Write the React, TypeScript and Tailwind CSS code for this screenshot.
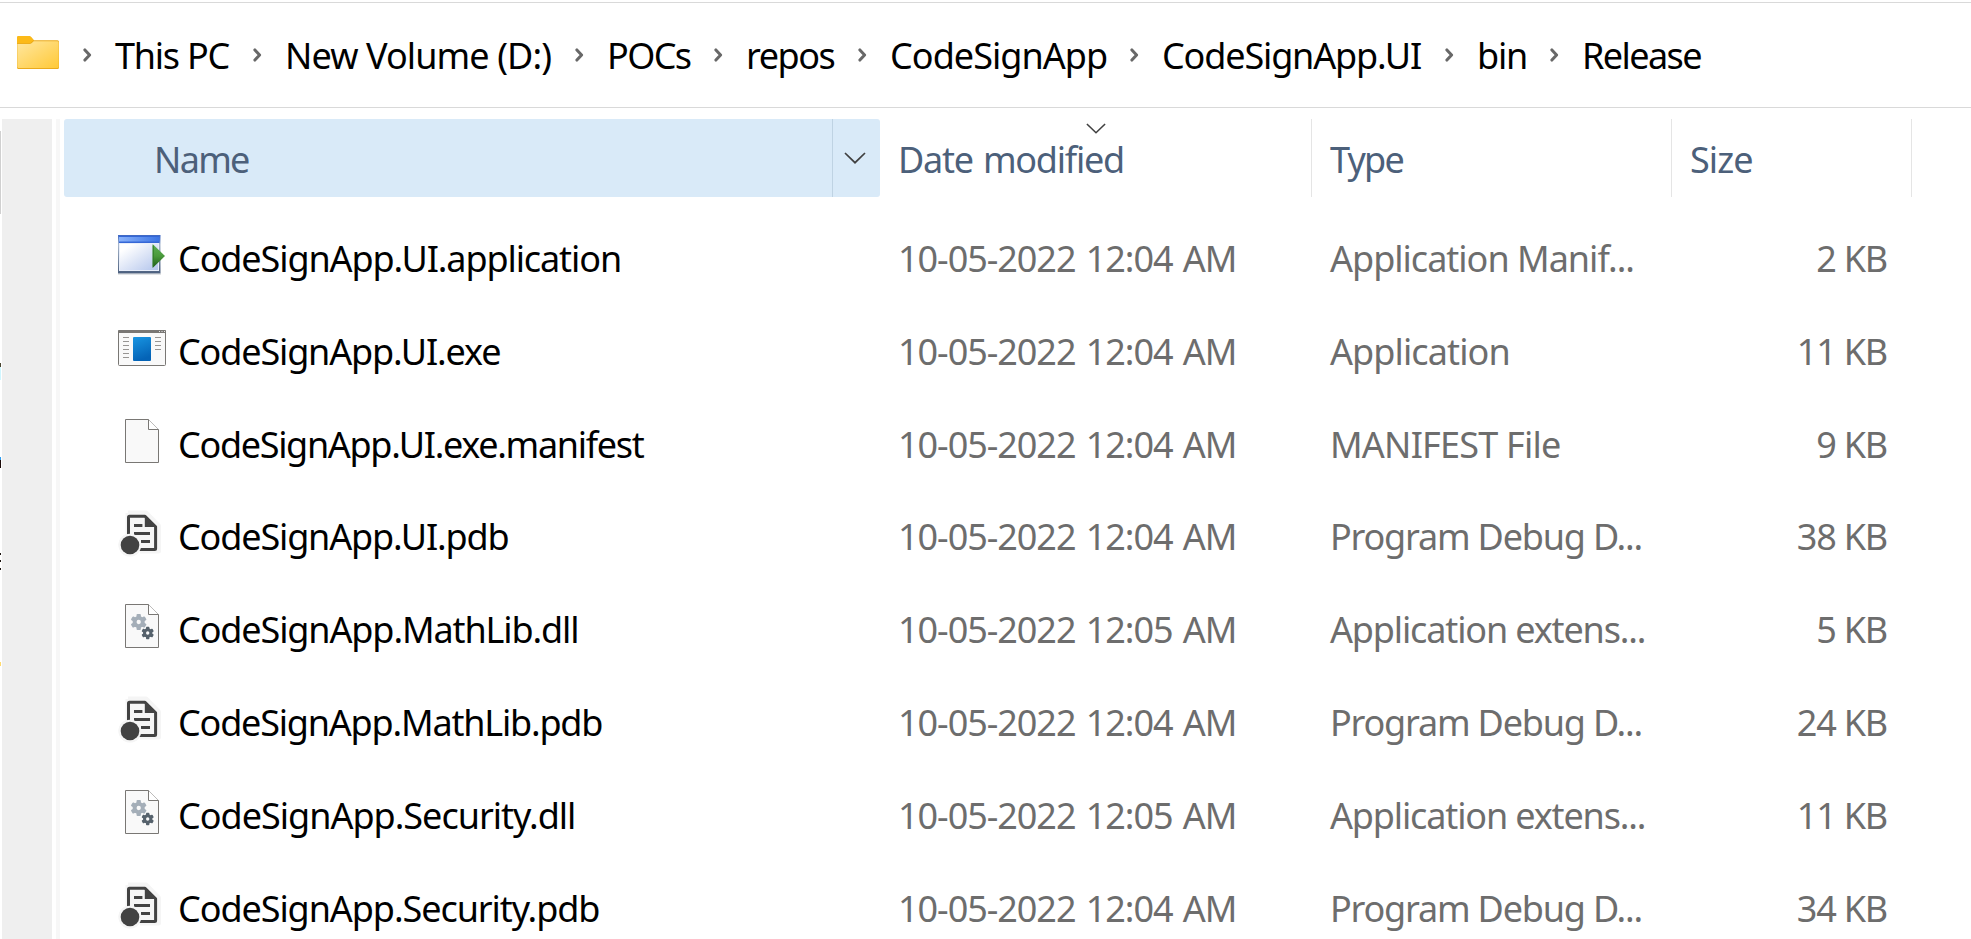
type IconKind = "application" | "exe" | "file" | "pdb" | "dll";

const crumbs = [
  { label: "This PC", cls: "w-[170px] tracking-[-1.25px]" },
  { label: "New Volume (D:)", cls: "w-[322px] tracking-[-0.9px]" },
  { label: "POCs", cls: "w-[139px] tracking-[-1.6px]" },
  { label: "repos", cls: "w-[144px] tracking-[-1.45px]" },
  { label: "CodeSignApp", cls: "w-[272px] tracking-[-0.95px]" },
  { label: "CodeSignApp.UI", cls: "w-[315px] tracking-[-1.15px]" },
  { label: "bin", cls: "w-[105px] tracking-[-1.2px]" },
  { label: "Release", cls: "w-[180px] tracking-[-1.6px]" },
];

const APP_MANIFEST = { type: "Application Manif...", typeCls: "tracking-[-1px]" };
const APPLICATION = { type: "Application", typeCls: "tracking-[-0.9px]" };
const MANIFEST = { type: "MANIFEST File", typeCls: "tracking-[-0.78px]" };
const DEBUG = { type: "Program Debug D...", typeCls: "tracking-[-1.2px]" };
const EXTENSION = { type: "Application extens...", typeCls: "tracking-[-1.15px]" };

const files: {
  icon: IconKind;
  name: string;
  nameCls: string;
  date: string;
  type: string;
  typeCls: string;
  size: string;
}[] = [
  { icon: "application", name: "CodeSignApp.UI.application", nameCls: "tracking-[-1.1px]", date: "10-05-2022 12:04 AM", ...APP_MANIFEST, size: "2 KB" },
  { icon: "exe", name: "CodeSignApp.UI.exe", nameCls: "tracking-[-1.15px]", date: "10-05-2022 12:04 AM", ...APPLICATION, size: "11 KB" },
  { icon: "file", name: "CodeSignApp.UI.exe.manifest", nameCls: "tracking-[-1.32px]", date: "10-05-2022 12:04 AM", ...MANIFEST, size: "9 KB" },
  { icon: "pdb", name: "CodeSignApp.UI.pdb", nameCls: "tracking-[-1.15px]", date: "10-05-2022 12:04 AM", ...DEBUG, size: "38 KB" },
  { icon: "dll", name: "CodeSignApp.MathLib.dll", nameCls: "tracking-[-1.12px]", date: "10-05-2022 12:05 AM", ...EXTENSION, size: "5 KB" },
  { icon: "pdb", name: "CodeSignApp.MathLib.pdb", nameCls: "tracking-[-1.2px]", date: "10-05-2022 12:04 AM", ...DEBUG, size: "24 KB" },
  { icon: "dll", name: "CodeSignApp.Security.dll", nameCls: "tracking-[-1px]", date: "10-05-2022 12:05 AM", ...EXTENSION, size: "11 KB" },
  { icon: "pdb", name: "CodeSignApp.Security.pdb", nameCls: "tracking-[-1.07px]", date: "10-05-2022 12:04 AM", ...DEBUG, size: "34 KB" },
];

function Folder() {
  return (
    <svg width="42" height="35" viewBox="0 0 42 35" className="block shrink-0">
      <defs>
        <linearGradient id="folder" x1="0" y1="0" x2="1" y2="1">
          <stop offset="0" stopColor="#ffe7a0" />
          <stop offset="1" stopColor="#ffc937" />
        </linearGradient>
      </defs>
      <path d="M0 1.5Q0 0 1.5 0H12Q13.5 0 14.5 1.5L17 4.2H40.5Q42 4.2 42 5.7V31.5Q42 33 40.5 33H1.5Q0 33 0 31.5Z" fill="#eaaa1c" />
      <path d="M0 1.5Q0 0 1.5 0H12Q13.5 0 14.5 1.5L16.6 4.2L13 7.2H0Z" fill="#fcba18" />
      <path d="M0.3 8H12.5Q13.8 8 14.8 7L16.7 5.2H40.2Q41.7 5.2 41.7 6.5V30.8Q41.7 32 40.4 32H1.6Q0.3 32 0.3 30.8Z" fill="url(#folder)" />
    </svg>
  );
}

function CrumbChevron() {
  return (
    <svg width="9" height="14" viewBox="0 0 9 14" className="mr-[23px] block shrink-0">
      <path d="M1.9 1.9L6.6 7L1.9 12.1" fill="none" stroke="#686868" strokeWidth="3" strokeLinecap="round" strokeLinejoin="round" />
    </svg>
  );
}

function Gear({ cx, cy, r, fill }: { cx: number; cy: number; r: number; fill: string }) {
  return (
    <g transform={`translate(${cx} ${cy})`}>
      {[0, 60, 120].map((a) => (
        <rect key={a} x={-r * 0.27} y={-r} width={r * 0.54} height={r * 2} rx={r * 0.12} transform={`rotate(${a})`} fill={fill} />
      ))}
      <circle r={r * 0.76} fill={fill} />
      <circle r={r * 0.27} fill="#f9f9f9" />
    </g>
  );
}

function Page() {
  return (
    <>
      <path d="M7.5 2.5H30.5L40.5 12.5V45.5H7.5Z" fill="#f9f9f9" stroke="#797774" strokeWidth="1" />
      <path d="M30.5 2.5V12.5H40.5" fill="#fff" stroke="#797774" strokeWidth="1" />
    </>
  );
}

function FileIcon({ kind }: { kind: IconKind }) {
  return (
    <svg width="48" height="48" viewBox="0 0 48 48" className="-mt-[6px] block shrink-0">
      {kind === "application" && (
        <>
          <defs>
            <linearGradient id="appBody" x1="0" y1="0" x2="1" y2="1">
              <stop offset="0.15" stopColor="#ffffff" />
              <stop offset="1" stopColor="#b3c5ec" />
            </linearGradient>
            <linearGradient id="appBar" x1="0" y1="0" x2="1" y2="0">
              <stop offset="0" stopColor="#8bb4fb" />
              <stop offset="1" stopColor="#3c74e4" />
            </linearGradient>
            <linearGradient id="appFrame" x1="0" y1="0" x2="0" y2="1">
              <stop offset="0" stopColor="#3b66c4" />
              <stop offset="0.25" stopColor="#a9b8cd" />
              <stop offset="1" stopColor="#4b5f7e" />
            </linearGradient>
            <linearGradient id="appPlay" x1="0" y1="0" x2="0" y2="1">
              <stop offset="0" stopColor="#5cb056" />
              <stop offset="0.5" stopColor="#4a9a3c" />
              <stop offset="1" stopColor="#1c5a17" />
            </linearGradient>
          </defs>
          <rect x="0" y="4" width="42.5" height="38.6" fill="url(#appFrame)" />
          <rect x="1" y="12" width="40" height="28" fill="#e8eefa" />
          <rect x="2" y="13" width="38" height="26" fill="url(#appBody)" />
          <rect x="1" y="5" width="40.5" height="7" fill="#3567d6" />
          <rect x="1" y="6" width="40.5" height="4.5" fill="url(#appBar)" />
          <rect x="0" y="42.6" width="43" height="0.9" fill="#c6c9ce" />
          <path d="M34.6 13V37L47 25Z" fill="url(#appPlay)" />
          <path d="M35.2 14.4V35.6" stroke="#2f7a28" strokeWidth="1" />
        </>
      )}
      {kind === "exe" && (
        <>
          <defs>
            <linearGradient id="exeBlue" x1="0" y1="0" x2="0.3" y2="1">
              <stop offset="0" stopColor="#1895e2" />
              <stop offset="1" stopColor="#0463b6" />
            </linearGradient>
          </defs>
          <rect x="0.5" y="6.5" width="47" height="35" rx="1" fill="#f9f9f9" stroke="#797774" />
          <path d="M0 9V7Q0 6 1 6H47Q48 6 48 7V9Z" fill="#797774" />
          <path d="M41 7.5H42M43.5 7.5H44.5M46 7.5H47" stroke="#e8e8e8" strokeWidth="1" />
          <path d="M5 13.5H11M5 17.5H11M5 21.5H11M5 25.5H11M5 29.5H11M5 33.5H11M37 13.5H43M37 17.5H43M37 21.5H43M37 25.5H43" stroke="#979593" strokeWidth="1" />
          <rect x="15" y="13" width="18" height="24" rx="1" fill="url(#exeBlue)" />
        </>
      )}
      {kind === "file" && <Page />}
      {kind === "dll" && (
        <>
          <Page />
          <Gear cx={20.7} cy={20} r={8} fill="#a4aeb8" />
          <Gear cx={29.7} cy={31} r={6.2} fill="#56626c" />
        </>
      )}
      {kind === "pdb" && (
        <>
          <path d="M10 4H28L40.5 17V42H22M10 4V28" fill="#f5f5f5" stroke="#f5f5f5" strokeWidth="5" strokeLinejoin="round" />
          <circle cx="12" cy="36" r="11.6" fill="#f5f5f5" />
          <path d="M10.5 30V8.2Q10.5 7.2 11.5 7.2H27L37.6 17.8V39.4Q37.6 40.4 36.6 40.4H14" fill="#f5f5f5" stroke="#424242" strokeWidth="3" strokeLinejoin="round" />
          <path d="M26.8 6V18H39Z" fill="#424242" />
          <path d="M16 16.4H24.4M16 24.5H32M23 32.5H32" stroke="#424242" strokeWidth="3" />
          <circle cx="12" cy="36" r="11.3" fill="#f5f5f5" />
          <circle cx="12" cy="36" r="9.3" fill="#424242" />
        </>
      )}
    </svg>
  );
}

function Chevron({ className, width, height }: { className: string; width: number; height: number }) {
  return (
    <svg width={width} height={height} viewBox="0 0 22 12" className={className}>
      <path d="M1 1L11 10.7L21 1" fill="none" stroke="#404040" strokeWidth="1.7" />
    </svg>
  );
}

export default function App() {
  return (
    <div className="flex h-[939px] w-[1971px] flex-col overflow-hidden bg-white font-['Noto_Sans',sans-serif] text-[36px] leading-[48px] whitespace-nowrap">
      <nav className="mt-[2px] flex h-[106px] shrink-0 items-center border-y border-[#d9d9d9] pl-[17px]">
        <div className="mr-[24px] -mt-[4px]">
          <Folder />
        </div>
        {crumbs.map((c) => (
          <div key={c.label} className={`flex shrink-0 items-center text-black ${c.cls}`}>
            <CrumbChevron />
            <span className="mt-px">{c.label}</span>
          </div>
        ))}
      </nav>

      <div className="flex grow pt-[11px]">
        <aside className="flex w-[64px] shrink-0">
          <div className="flex w-[2px] flex-col">
            <div className="mt-[12px] h-[83px] w-px bg-[#d0d0d0]" />
            <div className="mt-[149px] h-[4px] w-px bg-[#4a4430]" />
            <div className="h-[13px] w-px bg-[#cff6ff]" />
            <div className="mt-[77px] h-[3px] w-px bg-[#2f9cf0]" />
            <div className="h-[8px] w-px bg-[#1a0a08]" />
            <div className="mt-[85px] h-[2px] w-px bg-[#1c1410]" />
            <div className="mt-[5px] h-[2px] w-px bg-[#1c1410]" />
            <div className="mt-[6px] h-[2px] w-px bg-[#1c1410]" />
            <div className="mt-[92px] h-[4px] w-px bg-[#ffdb70]" />
          </div>
          <div className="w-[50px] bg-[#efefef]" />
          <div className="ml-[4px] w-[4px] bg-[#f7f7f7]" />
        </aside>

        <main className="flex grow flex-col">
          <div className="flex h-[78px] text-[#4c607a]">
            <div className="flex w-[816px] items-center rounded-[3px] bg-[#d9eaf8]">
              <div className="flex h-full grow items-center border-r border-[#bfd3e3] pt-[4px] pl-[90px] tracking-[-1.7px]">Name</div>
              <div className="flex w-[47px] pl-[11px]">
                <Chevron width={22} height={12} className="" />
              </div>
            </div>
            <div className="relative flex w-[432px] items-center border-r border-[#e5e5e5] pt-[4px] pl-[18px] tracking-[-1.25px] [word-spacing:2px]">
              Date modified
              <Chevron width={20} height={11} className="absolute top-[4px] left-[206px]" />
            </div>
            <div className="flex w-[360px] items-center border-r border-[#e5e5e5] pt-[4px] pl-[18px] tracking-[-1.8px]">Type</div>
            <div className="flex w-[240px] items-center border-r border-[#e5e5e5] pt-[4px] pl-[18px] tracking-[-0.9px]">Size</div>
          </div>

          <div className="flex flex-col pt-[14.6px] text-[#6d6d6d]">
            {files.map((f) => (
              <div key={f.name} className="flex h-[92.8px] shrink-0 items-center">
                <div className="flex w-[834px] items-center pl-[54px]">
                  <FileIcon kind={f.icon} />
                  <span className={`mt-[2px] ml-[12px] text-black ${f.nameCls}`}>{f.name}</span>
                </div>
                <div className={`mt-[2px] w-[432px] tracking-[-1.05px] [word-spacing:2px]`}>{f.date}</div>
                <div className={`mt-[2px] w-[360px] ${f.typeCls}`}>{f.type}</div>
                <div className="mt-[2px] w-[197px] text-right tracking-[-1.2px]">{f.size}</div>
              </div>
            ))}
          </div>
        </main>
      </div>
    </div>
  );
}
